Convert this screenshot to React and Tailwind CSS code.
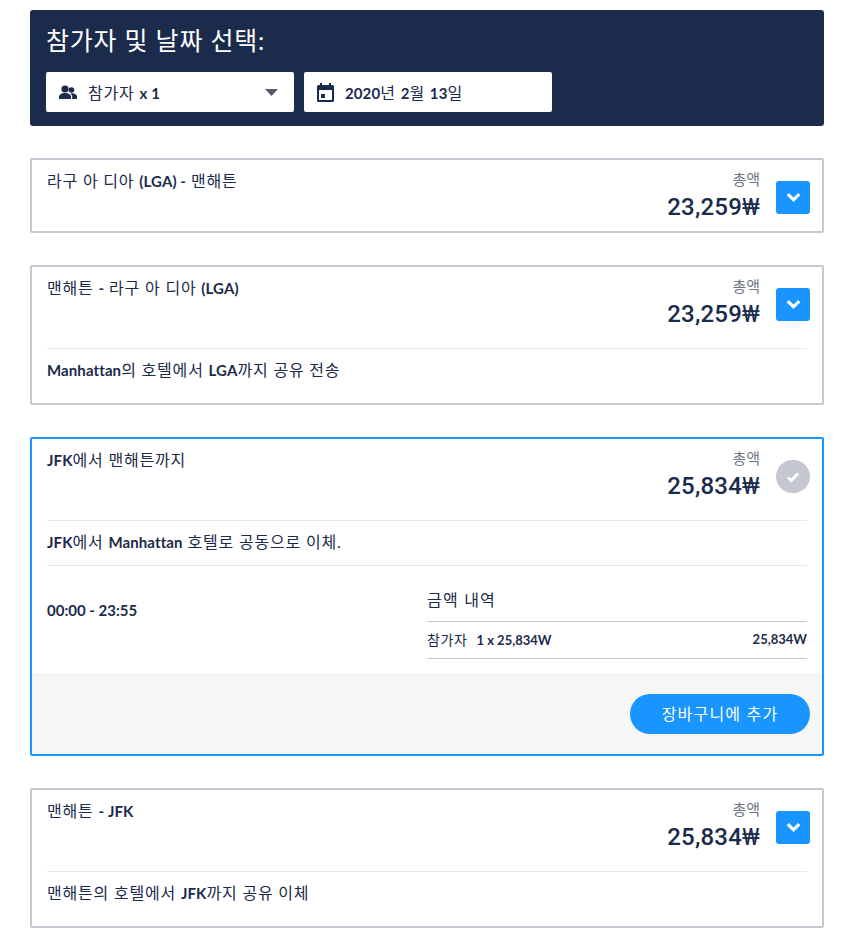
const FONT = { fontFamily: '"Lato", "Noto Sans CJK KR", sans-serif' };

function B({ children }) {
  return <b className="text-[15px] font-bold tracking-[0.1px]">{children}</b>;
}

function Price({ total, selected }) {
  return (
    <div className="flex items-start">
      <div className="flex flex-col items-end pt-[9px] pr-[16px]">
        <div className="text-[15px] leading-[20px] text-[#6f7583]">총액</div>
        <div className="mt-[2px] text-[24px] leading-[32px] font-medium text-[#1b2b4b] font-['Roboto'] tracking-[0.2px]">{total}<span className="font-normal">₩</span></div>
      </div>
      {selected ? (
        <div className="mt-[21px] flex h-[33px] w-[34px] items-center justify-center rounded-full bg-[#c5c8d0]">
          <svg width="14" height="12" viewBox="0 0 14 12" fill="none"><path d="M2 6.5 5.3 9.5 12 2.5" stroke="#fff" strokeWidth="3" /></svg>
        </div>
      ) : (
        <div className="mt-[21px] flex h-[33px] w-[34px] items-center justify-center rounded-[3px] bg-[#1895ff]">
          <svg width="15" height="11" viewBox="0 0 15 11" fill="none"><path d="M1.8 2.2 7.5 7.8 13.2 2.2" stroke="#fff" strokeWidth="3.2" /></svg>
        </div>
      )}
    </div>
  );
}

function Card({ title, total, desc, selected, children }) {
  return (
    <div className={`rounded-[2px] border-2 ${selected ? "border-[#1895ff]" : "border-[#c5c8d0]"} bg-white`}>
      <div className="flex h-[71px] justify-between pr-[12px] pl-[15px]">
        <div className="pt-[10px] text-[16px] leading-[22px] tracking-[0.8px] text-[#1b2b4b]">{title}</div>
        <Price total={total} selected={selected} />
      </div>
      {desc && (
        <div className="mx-[15px] mt-[10px] border-t border-[#e8e9ec] pt-[10px] pb-[22px] text-[16px] leading-[22px] tracking-[0.8px] text-[#1b2b4b]">{desc}</div>
      )}
      {children}
    </div>
  );
}

export default function App() {
  return (
    <div className="w-[844px] bg-white pt-[10px] pr-[20px] pb-[16px] pl-[30px]" style={FONT}>
      <div className="rounded-[3px] bg-[#1b2b4b] px-[16px] pt-[13px] pb-[14px]">
        <h1 className="text-[25px] leading-[35px] font-normal tracking-[0.8px] text-white">참가자 및 날짜 선택:</h1>
        <div className="mt-[14px] flex gap-[10px]">
          <div className="flex h-[40px] w-[248px] items-center rounded-[2px] bg-white pr-[16px] pl-[13px] text-[16px] tracking-[0.8px] text-[#1b2b4b]">
            <svg width="18" height="15" viewBox="0 0 18 15" fill="#1b2b4b"><circle cx="6" cy="4" r="3.6"/><path d="M0 14v-2c0-2.6 3-4 6-4s6 1.4 6 4v2z"/><circle cx="12.5" cy="5" r="2.8"/><path d="M13.2 14v-2.2c0-1.5-.8-2.6-1.8-3.4 3-.4 6.6.8 6.6 3.2V14z"/></svg>
            <span className="ml-[11px] mt-[2px]">참가자 <B>x 1</B></span>
            <svg className="ml-auto" width="13" height="7" viewBox="0 0 13 7" fill="#555b68"><path d="M0 0h13L6.5 7z"/></svg>
          </div>
          <div className="flex h-[40px] w-[248px] items-center rounded-[2px] bg-white pl-[13px] text-[16px] tracking-[0.8px] text-[#1b2b4b]">
            <svg width="17" height="19" viewBox="0 0 17 19" fill="#1b2b4b"><path d="M3 0h2v2h7V0h2v2h1.5A1.5 1.5 0 0 1 17 3.5v14a1.5 1.5 0 0 1-1.5 1.5h-14A1.5 1.5 0 0 1 0 17.5v-14A1.5 1.5 0 0 1 1.5 2H3zM2 7v10h13V7z"/><rect x="4" y="11" width="4" height="4"/></svg>
            <span className="ml-[11px] mt-[2px]"><B>2020</B>년 <B>2</B>월 <B>13</B>일</span>
          </div>
        </div>
      </div>

      <div className="mt-[32px] flex flex-col gap-[32px]">
        <Card title={<>라구 아 디아 <B>(LGA) -</B> 맨해튼</>} total="23,259" />
        <Card title={<>맨해튼 <B>-</B> 라구 아 디아 <B>(LGA)</B></>} total="23,259" desc={<><B>Manhattan</B>의 호텔에서 <B>LGA</B>까지 공유 전송</>} />
        <Card selected title={<><B>JFK</B>에서 맨해튼까지</>} total="25,834">
          <div className="mx-[15px] mt-[10px] border-t border-[#e8e9ec] pt-[10px] pb-[12px] text-[16px] leading-[22px] tracking-[0.8px] text-[#1b2b4b]"><B>JFK</B>에서 <B>Manhattan</B> 호텔로 공동으로 이체.</div>
          <div className="mx-[15px] flex border-t border-[#e8e9ec] pt-[22px] pb-[14px] text-[#1b2b4b]">
            <div className="w-[380px] pt-[11px] text-[15px] leading-[22px] font-bold">00:00 - 23:55</div>
            <div className="flex-1">
              <div className="text-[16px] leading-[24px] tracking-[1.2px]">금액 내역</div>
              <div className="mt-[9px] flex h-[38px] items-center justify-between border-y border-[#c5c8d0] text-[13px] font-bold">
                <span><span className="text-[14px] font-normal tracking-[0.6px]">참가자</span><span className="ml-[9px]">1 x 25,834W</span></span>
                <span>25,834W</span>
              </div>
            </div>
          </div>
          <div className="flex justify-end bg-[#f6f6f6] px-[12px] pt-[21px] pb-[20px]">
            <button className="h-[40px] w-[180px] rounded-full bg-[#1895ff] text-[16px] font-normal tracking-[1.2px] text-white">장바구니에 추가</button>
          </div>
        </Card>
        <Card title={<>맨해튼 <B>- JFK</B></>} total="25,834" desc={<>맨해튼의 호텔에서 <B>JFK</B>까지 공유 이체</>} />
      </div>
    </div>
  );
}
